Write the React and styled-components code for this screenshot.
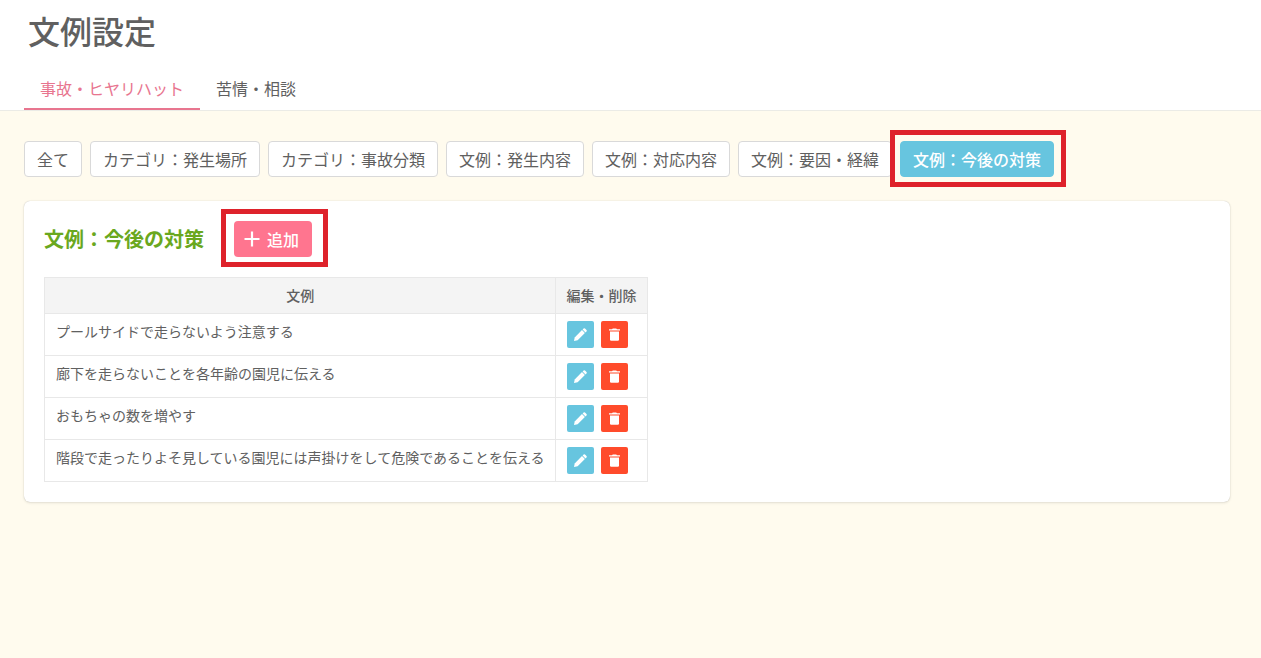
import React, {useState} from 'react'
import styled, { createGlobalStyle } from 'styled-components';

const mainTabs = ["事故・ヒヤリハット", "苦情・相談"];

const filters = [
  "全て",
  "カテゴリ：発生場所",
  "カテゴリ：事故分類",
  "文例：発生内容",
  "文例：対応内容",
  "文例：要因・経緯",
  "文例：今後の対策",
];

const examples = [
  "プールサイドで走らないよう注意する",
  "廊下を走らないことを各年齢の園児に伝える",
  "おもちゃの数を増やす",
  "階段で走ったりよそ見している園児には声掛けをして危険であることを伝える",
];

const PlusIcon = () => (
    <svg width="16" height="16" viewBox="0 0 16 16" aria-hidden="true">
        <path d="M8 0.5v15M0.5 8h15" stroke="currentColor" strokeWidth="2.2" fill="none" />
    </svg>
)

const PencilIcon = () => (
    <svg width="15" height="15" viewBox="0 0 15 15" fill="currentColor" aria-hidden="true">
        <path d="M1 14l0.7-3.6L9 3.1l2.9 2.9-7.3 7.3z" />
        <path d="M9.6 2.5l1-1q0.7-0.7 1.4 0l1.5 1.5q0.7 0.7 0 1.4l-1 1z" />
    </svg>
)

const TrashIcon = () => (
    <svg width="15" height="15" viewBox="0 0 15 15" fill="currentColor" aria-hidden="true">
        <path d="M2 2.2h3L5.8 1.4h3.4L10 2.2h3v1.4H2z" />
        <path d="M3 4.4h9v8.1q0 1.2-1.2 1.2H4.2Q3 13.7 3 12.5z" />
    </svg>
)

const App = () => {

  const [tab, setTab] = useState(mainTabs[0]);
  const [filter, setFilter] = useState(filters[6]);

    return (
        <>
        <GlobalStyle />
        <Header>
            <PageTitle>文例設定</PageTitle>
            <TabBar>
                {mainTabs.map((name) => (
                    <Tab key={name} type="button" $active={name === tab} onClick={() => setTab(name)}>
                        {name}
                    </Tab>
                ))}
            </TabBar>
        </Header>
        <Main>
            <FilterBar>
                {filters.map((name) => (
                    <Marked key={name}>
                        <FilterButton type="button" $active={name === filter} onClick={() => setFilter(name)}>
                            {name}
                        </FilterButton>
                        {name === filter && <FilterMarker aria-hidden="true" />}
                    </Marked>
                ))}
            </FilterBar>
            <Card>
                <CardHeader>
                    <CardTitle>{filter}</CardTitle>
                    <Marked>
                        <AddButton type="button">
                            <PlusIcon />
                            追加
                        </AddButton>
                        <AddMarker aria-hidden="true" />
                    </Marked>
                </CardHeader>
                <Table>
                    <thead>
                        <tr>
                            <HeadCell scope="col">文例</HeadCell>
                            <HeadCell scope="col">編集・削除</HeadCell>
                        </tr>
                    </thead>
                    <tbody>
                        {examples.map((text) => (
                            <tr key={text}>
                                <Cell>{text}</Cell>
                                <Cell>
                                    <Actions>
                                        <IconButton type="button" aria-label="編集" $color="#67c5df">
                                            <PencilIcon />
                                        </IconButton>
                                        <IconButton type="button" aria-label="削除" $color="#ff4b2b">
                                            <TrashIcon />
                                        </IconButton>
                                    </Actions>
                                </Cell>
                            </tr>
                        ))}
                    </tbody>
                </Table>
            </Card>
        </Main>
        </>
    )
}

const GlobalStyle = createGlobalStyle`
*{
    box-sizing: border-box;
}
body{
    margin: 0;
    background-color: #fffbee;
    color: #606060;
    font-family: "Noto Sans CJK JP", sans-serif;
    font-size: 16px;
    line-height: 24px;
}
button{
    font: inherit;
    cursor: pointer;
}
`;

const Header = styled.header`
    background-color: #fff;
    border-bottom: 1px solid #ebebe6;
    padding: 6px 24px 0;
`;

const PageTitle = styled.h1`
    margin: 0 4px 14px;
    font-size: 32px;
    line-height: 48px;
    font-weight: 500;
`;

const TabBar = styled.nav`
    display: flex;
`;

const Tab = styled.button`
    height: 42px;
    padding: 0 16px;
    background: none;
    border: 0;
    border-bottom: 2px solid ${({ $active }) => ($active ? "#e8758f" : "transparent")};
    color: ${({ $active }) => ($active ? "#e8758f" : "inherit")};
`;

const Main = styled.main`
    padding: 30px 31px 24px 24px;
`;

const FilterBar = styled.div`
    display: flex;
    flex-wrap: wrap;
    gap: 8px;
    margin-bottom: 24px;
`;

const Marked = styled.div`
    position: relative;
    display: flex;
`;

const FilterButton = styled.button`
    height: 36px;
    padding: 0 12px;
    border: 1px solid ${({ $active }) => ($active ? "#67c5df" : "#d9d9d9")};
    border-radius: 4px;
    background-color: ${({ $active }) => ($active ? "#67c5df" : "#fff")};
    color: ${({ $active }) => ($active ? "#fff" : "inherit")};
    font-weight: ${({ $active }) => ($active ? 500 : 400)};
`;

const Marker = styled.span`
    position: absolute;
    border: 5px solid #de222b;
    pointer-events: none;
`;

const FilterMarker = styled(Marker)`
    inset: -11px -12px -10px -10px;
`;

const AddMarker = styled(Marker)`
    inset: -12px -16px -10px -13px;
`;

const Card = styled.section`
    padding: 20px;
    background-color: #fff;
    border-radius: 6px;
    box-shadow: 0 0 1px rgba(0, 0, 0, 0.25), 0 1px 3px rgba(0, 0, 0, 0.1);
`;

const CardHeader = styled.div`
    display: flex;
    align-items: center;
    gap: 30px;
    margin-bottom: 20px;
`;

const CardTitle = styled.h2`
    margin: 0;
    color: #6aa81e;
    font-size: 20px;
    font-weight: 700;
`;

const AddButton = styled.button`
    display: flex;
    align-items: center;
    gap: 7px;
    height: 36px;
    padding: 0 13px 0 10px;
    border: 0;
    border-radius: 4px;
    background-color: #ff758f;
    color: #fff;
    font-weight: 500;
`;

const Table = styled.table`
    border-collapse: collapse;
    font-size: 14px;
    line-height: 21px;
`;

const HeadCell = styled.th`
    padding: 7px 10px 7px 11px;
    border: 1px solid #e8e8e8;
    background-color: #f4f4f4;
    font-weight: 500;
`;

const Cell = styled.td`
    padding: 7px 10px 7px 11px;
    border: 1px solid #e8e8e8;
    vertical-align: top;
`;

const Actions = styled.div`
    display: flex;
    gap: 7px;
`;

const IconButton = styled.button`
    display: flex;
    align-items: center;
    justify-content: center;
    width: 27px;
    height: 27px;
    padding: 0;
    border: 0;
    border-radius: 2px;
    background-color: ${({ $color }) => $color};
    color: #fff;
`;

export default App;
